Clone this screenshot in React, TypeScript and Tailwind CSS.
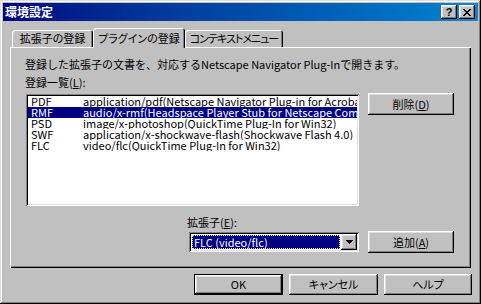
import type { ReactNode } from 'react';

const font = "font-['Noto_Sans_CJK_JP','Liberation_Sans',sans-serif]";
const palt = "[font-feature-settings:'palt']";
const raised = 'bg-[#c0c0c0] shadow-[inset_-1px_-1px_#000,inset_1px_1px_#fff,inset_-2px_-2px_#808080,inset_2px_2px_#dfdfdf]';
const sunken = 'shadow-[inset_1px_1px_#808080,inset_-1px_-1px_#fff,inset_2px_2px_#000,inset_-2px_-2px_#dfdfdf]';

interface Plugin {
  ext: string;
  mime: string;
}

const plugins: Plugin[] = [
  { ext: 'PDF', mime: 'application/pdf(Netscape Navigator Plug-in for Acrobat)' },
  { ext: 'RMF', mime: 'audio/x-rmf(Headspace Player Stub for Netscape Communicator)' },
  { ext: 'PSD', mime: 'image/x-photoshop(QuickTime Plug-In for Win32)' },
  { ext: 'SWF', mime: 'application/x-shockwave-flash(Shockwave Flash 4.0)' },
  { ext: 'FLC', mime: 'video/flc(QuickTime Plug-In for Win32)' },
];

function Button({ children, className = '' }: { children: ReactNode; className?: string }) {
  return (
    <button className={`${raised} flex items-center justify-center leading-none ${className}`}>
      {children}
    </button>
  );
}

function Tab({ label, active, className = '' }: { label: string; active?: boolean; className?: string }) {
  return (
    <div
      className={`relative z-10 bg-[#c0c0c0] rounded-t-[3px] flex items-center justify-center leading-none whitespace-nowrap shadow-[inset_1px_1px_#fff,inset_-1px_0_#000,inset_-2px_0_#808080] ${palt} ${
        active ? 'h-[20px] -mb-px' : 'h-[17px]'
      } ${className}`}
    >
      {label}
    </div>
  );
}

export default function App() {
  return (
    <div
      className={`w-[481px] h-[304px] bg-[#c0c0c0] p-[3px] flex flex-col text-[11px] text-black ${font} shadow-[inset_-1px_-1px_#000,inset_1px_1px_#dfdfdf,inset_-2px_-2px_#808080,inset_2px_2px_#fff]`}
    >
      {/* Title bar */}
      <div className="h-[18px] flex items-center bg-linear-to-r from-[#000080] to-[#1084d0] pl-[2px] pr-[3px]">
        <span className="text-white text-[12px] font-bold leading-[18px]">環境設定</span>
        <div className="ml-auto flex gap-[2px]">
          <Button className="w-[16px] h-[14px] text-[11px] font-bold font-['Liberation_Sans',sans-serif]">?</Button>
          <Button className="w-[16px] h-[14px]">
            <svg width="8" height="7" viewBox="0 0 8 7" shapeRendering="crispEdges">
              <path d="M0 0h2v1h-2zM6 0h2v1h-2zM1 1h2v1h-2zM5 1h2v1h-2zM2 2h4v1h-4zM3 3h2v1h-2zM2 4h4v1h-4zM1 5h2v1h-2zM5 5h2v1h-2zM0 6h2v1h-2zM6 6h2v1h-2z" fill="#000" />
            </svg>
          </Button>
        </div>
      </div>

      {/* Tabs */}
      <div className="mt-[7px] ml-[9px] h-[19px] flex items-end">
        <div className="w-[81px]"><Tab label="拡張子の登録" /></div>
        <div className="w-[92px]"><Tab label="プラグインの登録" active /></div>
        <div className="w-[98px]"><Tab label="コンテキストメニュー" className="tracking-[-1px]" /></div>
      </div>

      {/* Panel */}
      <div className="ml-[7px] w-[461px] h-[221px] flex flex-col pl-[15px] pt-[11px] shadow-[inset_1px_1px_#fff,inset_-1px_-1px_#000,inset_-2px_-2px_#808080]">
        <p className="h-[13px] leading-[13px] whitespace-nowrap">
          登録した拡張子の文書を、対応するNetscape Navigator Plug-Inで開きます。
        </p>
        <p className="mt-[5px] h-[13px] leading-[13px]">
          登録一覧(<span className="underline">L</span>):
        </p>

        <div className="mt-[5px] flex items-start">
          <div className={`ml-[1px] w-[333px] h-[112px] bg-white p-[2px] overflow-hidden ${sunken}`}>
            {plugins.map((p) => {
              const sel = p.ext === 'RMF';
              return (
                <div
                  key={p.ext}
                  className={`h-[11px] leading-[11px] flex whitespace-nowrap overflow-hidden ${
                    sel ? 'bg-[#000080] text-white' : ''
                  }`}
                >
                  <span className="w-[55px] shrink-0 pl-[3px]">{p.ext}</span>
                  <span>{p.mime}</span>
                </div>
              );
            })}
          </div>
          <Button className="ml-[9px] -mt-px w-[86px] h-[22px]">
            削除(<span className="underline">D</span>)
          </Button>
        </div>

        <div className="mt-[10px] flex items-end">
          <div className="ml-[162px] flex flex-col">
            <p className="h-[13px] leading-[13px]">
              拡張子(<span className="underline">E</span>):
            </p>
            <div className={`mt-[3px] ml-[2px] w-[170px] h-[20px] bg-white p-[2px] flex ${sunken}`}>
              <div className="ml-[1px] mt-[1px] w-[148px] h-[14px] bg-[#000080] border border-dotted border-[#e8e890] text-white leading-[12px] pl-[1px]">
                FLC (video/flc)
              </div>
              <Button className="ml-auto w-[16px] h-[16px]">
                <svg width="7" height="4" viewBox="0 0 7 4" shapeRendering="crispEdges">
                  <path d="M0 0h7v1h-7zM1 1h5v1h-5zM2 2h3v1h-3zM3 3h1v1h-1z" fill="#000" />
                </svg>
              </Button>
            </div>
          </div>
          <Button className="ml-[9px] -mb-px w-[86px] h-[22px]">
            追加(<span className="underline">A</span>)
          </Button>
        </div>
      </div>

      {/* Dialog buttons */}
      <div className={`mt-[6px] pr-[6px] flex justify-end gap-[6px] ${palt}`}>
        <div className="w-[89px] h-[21px] border border-black flex">
          <Button className="flex-1">OK</Button>
        </div>
        <Button className="w-[89px] h-[21px]">キャンセル</Button>
        <Button className="w-[88px] h-[21px]">ヘルプ</Button>
      </div>
    </div>
  );
}
